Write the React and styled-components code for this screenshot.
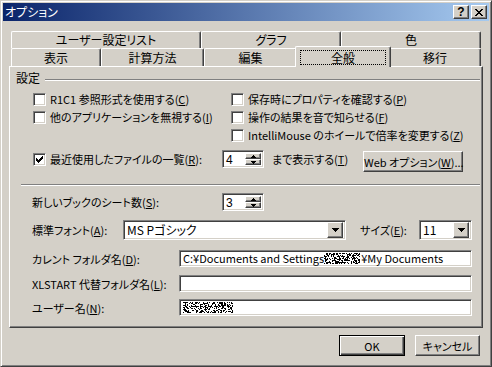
import styled, { createGlobalStyle } from "styled-components";

const GlobalStyle = createGlobalStyle`
  html, body { margin: 0; padding: 0; background: #d4d0c8; }
  body {
    font-family: "Noto Sans CJK JP", "Liberation Sans", sans-serif;
    font-size: 11px;
    font-feature-settings: "palt";
    color: #000;
  }
  * { box-sizing: border-box; }
`;

const raised = `
  border: 1px solid;
  border-color: #fff #404040 #404040 #fff;
  box-shadow: inset -1px -1px #808080, inset 1px 1px #d4d0c8;
  background: #d4d0c8;
`;

const sunken = `
  border: 1px solid;
  border-color: #808080 #fff #fff #808080;
  box-shadow: inset 1px 1px #404040, inset -1px -1px #d4d0c8;
  background: #fff;
`;

const Window = styled.div`
  width: 492px;
  height: 367px;
  display: flex;
  flex-direction: column;
  background: #d4d0c8;
  border: 1px solid;
  border-color: #d4d0c8 #404040 #404040 #d4d0c8;
  box-shadow: inset 1px 1px #fff, inset -1px -1px #808080;
  padding: 2px;
`;

const TitleBar = styled.div`
  height: 18px;
  display: flex;
  align-items: center;
  gap: 2px;
  padding: 0 2px;
  background: linear-gradient(to right, #0a246a, #a6caf0);
  color: #fff;
`;

const TitleText = styled.span`
  flex: 1;
  font-size: 12px;
  line-height: 18px;
`;

const CaptionButton = styled.span`
  ${raised}
  width: 16px;
  height: 14px;
  display: flex;
  align-items: center;
  justify-content: center;
  font-family: "Liberation Sans", sans-serif;
  font-weight: bold;
  font-size: 12px;
  line-height: 12px;
  color: #000;
`;

const Body = styled.div`
  display: flex;
  flex-direction: column;
  padding: 10px 6px 0 6px;
`;

const TabRow = styled.div`
  display: flex;
  margin-left: 2px;
  height: ${(p) => p.$h}px;
`;

const Tab = styled.div`
  width: ${(p) => p.$w}px;
  height: ${(p) => p.$h}px;
  flex: none;
  display: flex;
  align-items: center;
  justify-content: center;
  background: #d4d0c8;
  border-top: 1px solid #fff;
  border-left: 1px solid #fff;
  border-right: 1px solid #404040;
  box-shadow: inset -1px 0 #808080;
  border-radius: 2px 2px 0 0;
  font-size: 12px;
  line-height: 14px;
`;

const ActiveTab = styled(Tab)`
  position: relative;
  z-index: 1;
  margin: -2px -2px -1px -2px;
  padding-top: 1px;
`;

const FocusRing = styled.span`
  width: 86px;
  height: 15px;
  border: 1px dotted #000;
  display: flex;
  align-items: center;
  justify-content: center;
  line-height: 13px;
`;

const Panel = styled.div`
  height: 262px;
  display: flex;
  flex-direction: column;
  border-top: 1px solid #fff;
  border-left: 1px solid #fff;
  border-right: 1px solid #404040;
  border-bottom: 1px solid #404040;
  box-shadow: inset -1px -1px #808080;
  padding: 4px 2px 0 6px;
`;

const GroupHeader = styled.div`
  display: flex;
  align-items: center;
  height: 14px;
  line-height: 14px;
  gap: 5px;
  font-size: 12px;
`;

const Etched = styled.div`
  flex: ${(p) => (p.$fixed ? "none" : 1)};
  height: 2px;
  border-top: 1px solid #808080;
  border-bottom: 1px solid #fff;
  margin-left: ${(p) => p.$indent || 0}px;
  margin-top: ${(p) => p.$top || 0}px;
`;

const CheckGrid = styled.div`
  display: grid;
  grid-template-columns: 198px 1fr;
  grid-auto-rows: 18px;
  margin: 5px 0 0 17px;
`;

const CheckLabel = styled.label`
  display: flex;
  align-items: center;
  gap: 4px;
  height: ${(p) => p.$h || 18}px;
  width: ${(p) => (p.$w ? `${p.$w}px` : "auto")};
  flex: none;
  white-space: nowrap;
  line-height: 14px;
  grid-column: ${(p) => p.$col || "auto"};
`;

const Box = styled.span`
  ${sunken}
  width: 13px;
  height: 13px;
  flex: none;
  display: flex;
  align-items: center;
  justify-content: center;
`;

const Row = styled.div`
  display: flex;
  align-items: ${(p) => p.$align || "center"};
  margin-top: ${(p) => p.$top}px;
  margin-left: ${(p) => p.$left || 16}px;
`;

const Label = styled.span`
  width: ${(p) => p.$w}px;
  flex: none;
  white-space: nowrap;
  line-height: 14px;
  padding-left: ${(p) => p.$pad || 0}px;
  margin-top: ${(p) => p.$top || 0}px;
`;

const SpinBox = styled.div`
  ${sunken}
  width: 42px;
  height: 18px;
  display: flex;
  padding: 2px;
  flex: none;
`;

const SpinValue = styled.span`
  flex: 1;
  padding-left: 1px;
  font-size: 12px;
  line-height: 14px;
  font-family: "Liberation Sans", sans-serif;
`;

const SpinButtons = styled.div`
  width: 16px;
  display: flex;
  flex-direction: column;
`;

const SpinButton = styled.span`
  ${raised}
  flex: 1;
  display: flex;
  align-items: center;
  justify-content: center;
`;

const PushButton = styled.button`
  ${raised}
  width: ${(p) => p.$w}px;
  height: 21px;
  flex: none;
  padding: 0;
  font: inherit;
  font-size: 11px;
  line-height: 14px;
  white-space: nowrap;
  color: #000;
  margin-top: ${(p) => p.$top || 0}px;
  ${(p) =>
    p.$default &&
    `
    border: 1px solid #000;
    box-shadow: inset 1px 1px #fff, inset -1px -1px #404040, inset -2px -2px #808080;
  `}
`;

const Combo = styled.div`
  ${sunken}
  width: ${(p) => p.$w}px;
  height: 20px;
  flex: none;
  display: flex;
  align-items: center;
  padding: 2px;
`;

const ComboText = styled.span`
  flex: 1;
  padding-left: 1px;
  font-size: 12px;
  line-height: 14px;
  white-space: nowrap;
`;

const DropButton = styled.span`
  ${raised}
  width: 16px;
  height: 16px;
  display: flex;
  align-items: center;
  justify-content: center;
`;

const Field = styled.div`
  ${sunken}
  width: 293px;
  height: 17px;
  flex: none;
  display: flex;
  align-items: center;
  padding: 0 3px;
  overflow: hidden;
  white-space: nowrap;
  line-height: 13px;
`;

const Footer = styled.div`
  display: flex;
  justify-content: flex-end;
  gap: 10px;
  margin-top: 7px;
  padding-right: 3px;
`;

const CheckMark = () => (
  <svg width="7" height="7" viewBox="0 0 7 7">
    <path d="M0 2h1v1h1v1h1v-1h1v-1h1v-1h1v-1h1v3h-1v1h-1v1h-1v1h-1v1h-1v-1h-1v-1h-1z" fill="#000" />
  </svg>
);

const UpArrow = () => (
  <svg width="5" height="3" viewBox="0 0 5 3">
    <path d="M2 0h1v1h1v1h1v1h-5v-1h1v-1h1z" fill="#000" />
  </svg>
);

const DownArrow = () => (
  <svg width="5" height="3" viewBox="0 0 5 3">
    <path d="M0 0h5v1h-1v1h-1v1h-1v-1h-1v-1h-1z" fill="#000" />
  </svg>
);

const ComboArrow = () => (
  <svg width="7" height="4" viewBox="0 0 7 4">
    <path d="M0 0h7v1h-1v1h-1v1h-1v1h-1v-1h-1v-1h-1v-1h-1z" fill="#000" />
  </svg>
);

const CloseGlyph = () => (
  <svg width="8" height="7" viewBox="0 0 8 7">
    <path
      d="M0 0h2v1h1v1h2v-1h1v-1h2v1h-1v1h-1v1h-1v1h1v1h1v1h1v1h-2v-1h-1v-1h-2v1h-1v1h-2v-1h1v-1h1v-1h1v-1h-1v-1h-1v-1h-1z"
      fill="#000"
    />
  </svg>
);

const Noise = ({ w, h, seed }) => {
  let s = seed;
  const dots = [];
  for (let y = 0; y < h; y++) {
    for (let x = 0; x < w; x++) {
      s = (s * 9301 + 49297) % 233280;
      if (s / 233280 < 0.42) dots.push(<rect key={`${x}-${y}`} x={x} y={y} width="1" height="1" />);
    }
  }
  return (
    <svg width={w} height={h} viewBox={`0 0 ${w} ${h}`} fill="#000" style={{ flex: "none" }}>
      {dots}
    </svg>
  );
};

const Check = ({ children, checked, col, w, h }) => (
  <CheckLabel $col={col} $w={w} $h={h}>
    <Box>{checked && <CheckMark />}</Box>
    <span>{children}</span>
  </CheckLabel>
);

const Spin = ({ value }) => (
  <SpinBox>
    <SpinValue>{value}</SpinValue>
    <SpinButtons>
      <SpinButton>
        <UpArrow />
      </SpinButton>
      <SpinButton>
        <DownArrow />
      </SpinButton>
    </SpinButtons>
  </SpinBox>
);

const backTabs = [
  { label: "ユーザー設定リスト", w: 190 },
  { label: "グラフ", w: 140 },
  { label: "色", w: 140 },
];

const frontTabs = [
  { label: "表示", w: 90 },
  { label: "計算方法", w: 103 },
  { label: "編集", w: 93 },
  { label: "全般", w: 96, active: true },
  { label: "移行", w: 92 },
];

export default function App() {
  return (
    <>
      <GlobalStyle />
      <Window>
        <TitleBar>
          <TitleText>オプション</TitleText>
          <CaptionButton>?</CaptionButton>
          <CaptionButton>
            <CloseGlyph />
          </CaptionButton>
        </TitleBar>
        <Body>
          <TabRow $h={17}>
            {backTabs.map((t) => (
              <Tab key={t.label} $w={t.w} $h={17}>
                {t.label}
              </Tab>
            ))}
          </TabRow>
          <TabRow $h={18}>
            {frontTabs.map((t) =>
              t.active ? (
                <ActiveTab key={t.label} $w={t.w} $h={21}>
                  <FocusRing>{t.label}</FocusRing>
                </ActiveTab>
              ) : (
                <Tab key={t.label} $w={t.w} $h={18}>
                  {t.label}
                </Tab>
              )
            )}
          </TabRow>
          <Panel>
            <GroupHeader>
              <span>設定</span>
              <Etched $top={3} />
            </GroupHeader>
            <CheckGrid>
              <Check>
                R1C1 参照形式を使用する(<u>C</u>)
              </Check>
              <Check>
                保存時にプロパティを確認する(<u>P</u>)
              </Check>
              <Check>
                他のアプリケーションを無視する(<u>I</u>)
              </Check>
              <Check>
                操作の結果を音で知らせる(<u>F</u>)
              </Check>
              <Check col="2">
                IntelliMouse のホイールで倍率を変更する(<u>Z</u>)
              </Check>
            </CheckGrid>
            <Row $top={6} $left={17} $align="flex-start">
              <Check checked w={189} h={18}>
                最近使用したファイルの一覧(<u>R</u>):
              </Check>
              <Spin value="4" />
              <Label $w={99} $pad={8} $top={2}>
                まで表示する(<u>T</u>)
              </Label>
              <PushButton $w={100} $top={1}>
                Web オプション(<u>W</u>)...
              </PushButton>
            </Row>
            <Etched $fixed $indent={5} $top={12} />
            <Row $top={7}>
              <Label $w={190}>
                新しいブックのシート数(<u>S</u>):
              </Label>
              <Spin value="3" />
            </Row>
            <Row $top={9}>
              <Label $w={91}>
                標準フォント(<u>A</u>):
              </Label>
              <Combo $w={223}>
                <ComboText>MS Pゴシック</ComboText>
                <DropButton>
                  <ComboArrow />
                </DropButton>
              </Combo>
              <Label $w={73} $pad={14}>
                サイズ(<u>E</u>):
              </Label>
              <Combo $w={53}>
                <ComboText>11</ComboText>
                <DropButton>
                  <ComboArrow />
                </DropButton>
              </Combo>
            </Row>
            <Row $top={10}>
              <Label $w={147}>
                カレント フォルダ名(<u>D</u>):
              </Label>
              <Field>
                <span>C:¥Documents and Settings</span>
                <Noise w={37} h={11} seed={17} />
                <span>¥My Documents</span>
              </Field>
            </Row>
            <Row $top={8}>
              <Label $w={147}>
                XLSTART 代替フォルダ名(<u>L</u>):
              </Label>
              <Field />
            </Row>
            <Row $top={7}>
              <Label $w={147}>
                ユーザー名(<u>N</u>):
              </Label>
              <Field>
                <Noise w={50} h={11} seed={71} />
              </Field>
            </Row>
          </Panel>
          <Footer>
            <PushButton $w={66} $default>
              OK
            </PushButton>
            <PushButton $w={65}>キャンセル</PushButton>
          </Footer>
        </Body>
      </Window>
    </>
  );
}
